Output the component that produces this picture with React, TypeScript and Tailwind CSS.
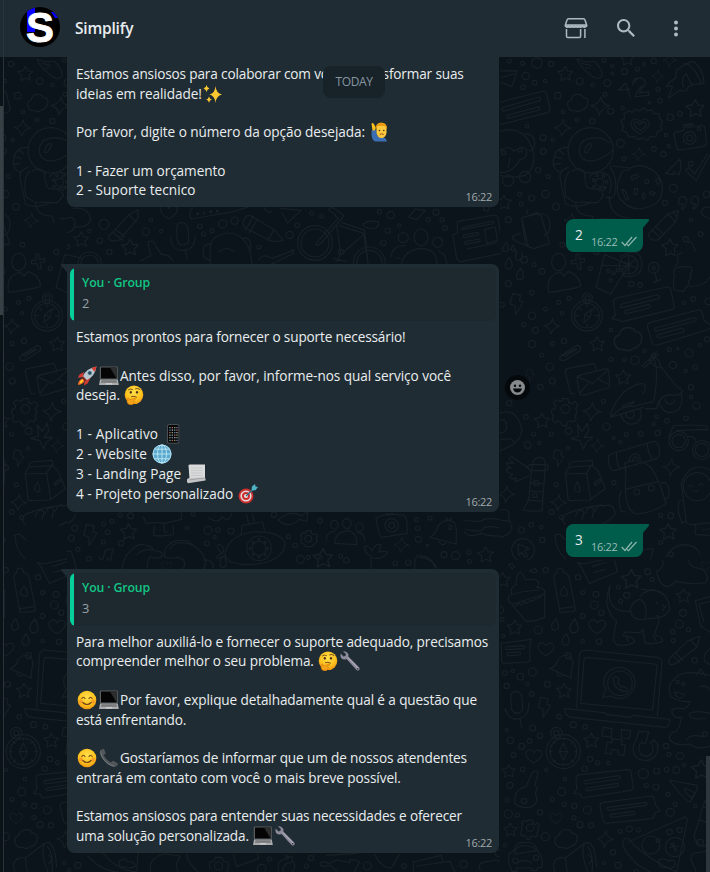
import type { ReactNode } from 'react'

type Dot = [number, number, number]
type Mark = [number, number, number?]

/* ---------- Wallpaper doodles ---------- */

const STAR = 'M0-22l7 14 15 1-11 12 4 15-14-7-14 8 2-16-12-11 16-3z'
const SPARK = 'M2-28Q4-4 28 0Q4 4-4 28Q-5 5-28-2Q-4-4 2-28z'
const HEART = 'M0 22Q-24 8-25-8Q-22-24-6-18Q0-14 1-10Q8-22 20-17Q32-8 20 6Q12 16 0 22z'
const CLOUD = 'M-28 14Q-36-2-20-8Q-14-28 4-24Q14-24 16-16Q34-14 30 2Q28 18 12 22Q2 30-8 24Q-24 26-28 14z'
const BOLT = 'M-12-30L12-24 8-8 20-4-4 34-4 8-20 2z'
const DROP = 'M2-18Q12 0 10 10Q4 20-6 16Q-14 8-8-4z'

function Dots({ list }: { list: Dot[] }) {
  return <>{list.map(([x, y, r], i) => <circle key={i} cx={x} cy={y} r={r} />)}</>
}

function Marks({ d, at }: { d: string; at: Mark[] }) {
  return <>{at.map(([x, y, s = 1], i) => <path key={i} d={d} transform={`translate(${x} ${y}) scale(${s})`} />)}</>
}

function DoodlesTop() {
  return (
    <g transform="translate(500 0) scale(.33333)">
      <Dots list={[[28, 183, 6], [68, 190, 6], [111, 189, 16], [153, 192, 8], [77, 228, 11], [104, 248, 7], [135, 243, 5], [69, 262, 7], [173, 287, 10], [239, 244, 10], [277, 254, 5], [322, 249, 10], [312, 181, 6], [337, 197, 5], [337, 220, 4], [374, 215, 9], [412, 207, 6], [433, 192, 5], [461, 183, 8], [474, 268, 6], [480, 302, 7], [448, 308, 4], [511, 352, 10], [540, 341, 7], [368, 325, 5], [332, 333, 9], [315, 283, 6], [189, 336, 5], [231, 360, 5], [277, 363, 8], [81, 379, 5], [129, 413, 9], [158, 419, 5], [130, 454, 9], [145, 529, 6], [114, 511, 8], [59, 583, 6], [64, 612, 6], [95, 594, 9], [136, 582, 11], [25, 659, 9], [168, 620, 10], [361, 430, 12], [372, 476, 6], [462, 447, 7], [490, 463, 8], [506, 438, 5], [498, 405, 5], [520, 565, 12], [572, 491, 7], [495, 609, 8], [573, 659, 5], [187, 734, 7], [620, 583, 10], [557, 718, 8], [602, 702, 7], [299, 547, 12], [281, 540, 4], [291, 526, 4], [310, 528, 4], [320, 545, 4], [315, 562, 4], [299, 568, 4], [282, 560, 4]]} />
      <Marks d={STAR} at={[[196, 221], [586, 325, 1.2], [12, 607], [510, 741, 1.1], [382, 176, 0.9]]} />
      <Marks d={SPARK} at={[[301, 318], [188, 384, 0.9], [473, 229, 0.65], [416, 463, 0.7], [510, 181, 0.75], [214, 662, 0.8]]} />
      <Marks d={CLOUD} at={[[233, 308]]} />
      <path d="M-6 213L52 212 36 260 6 247M6 232l36-10M-8 309L130 273Q138 274 140 282L150 326Q150 335 142 338L0 374M8 323L118 291q6 4 2 11L10 334q-8-3-2-11zM22 346l94-26q5 3 1 10L24 355q-6-3-2-9z" />
      <path d="M232 177q28 14 50 6 26 22 24 44-8 16-30 2-34-26-44-48zM246 190l26 6M256 204l14 0" />
      <path d="M377 249l-22 22 36-4M378 250l14 46M381 264l7 19M404 250q0-16 18-16 18 6 12 20l-16 24 28-2 0 10-40 4q0-12 20-32M397 254q4-28 30-18" />
      <path d="M528 213q30-26 54-28 30 24 30 66l-32 2q-18 6-22 20l-18-2-36 24 14-36-18 0q8-16 28-24zM552 190q30 4 52 60M550 260q-8-24 8-40l18 36" />
      <path d="M386 333l12 4 8-10 14 6 10-10 12 10 14-4 6 12 16 0 0 14 10 8-6 12 4 14-14 6-4 16-16-2-10 12-14-8-14 6-12-10-16 2-6-14-14-4 4-16-8-14 12-8-2-14zM420 402Q390 386 393 366q12-18 28 0 14-18 26 0 4 18-27 36zM420 391q-18-10-18-22 8-8 18 5 10-12 18-4 2 12-18 21z" />
      <path d="M525 397l27-6-2-16 26-6 8 12 20-4q10-1 11 9l4 44q0 8-8 9l-70 11q-10 0-11-8l-8-38q-1-6 3-7zM556 378l18-4 2 6-18 4z" />
      <Dots list={[[569, 414, 19], [569, 414, 9], [597, 387, 5]]} />
      <path d="M497 520L540 477q6 20-2 46-8 3-16-8l-2 9zM556 510l10-8 18 20 38-60M556 510l32 32 42-78" />
      {/* owl */}
      <path d="M-6 396q60-22 90 24 40 66-8 106-36 10-80 0M0 452q26-20 42 2 30-22 38-2 2 24-20 26-20 40-60 40M30 474l-6 30M70 402q30-4 34 26 0 22-16 24" />
      <Dots list={[[11, 458, 6], [60, 450, 6], [24, 542, 17], [75, 531, 17]]} />
      {/* astronaut */}
      <circle cx="272" cy="451" r="68" />
      <path d="M337 452Q280 500 246 474 228 450 248 424q20-16 60-8l22 12M254 456q0-22 18-26 6 6-4 16-4 16-14 10zM204 442q-46 0-44 50 4 22 20 24M177 450l14 12M164 470l20 6M161 494l20-4M204 502q-28 10-24 30l16 80q30 16 76-5M208 514q-20 20-10 76l24 16 70 2 18-20-4-14 12-12-10 0q-18 10-44 2-10-12-10-46-10-20-38-4M330 500q26 40 14 80-4 18-26 12M227 608q0 40 50 40l4 20M328 590q0 60 60 64M300 656l100 4M336 498l56 6M268 530q28-26 58-2 14 20 2 50" />
      {/* donut */}
      <path d="M360 530q-16 36-2 64 34 42 76 30 50-10 52-50 6-42-30-64-40-26-72 0-24 2-24 20zM392 530l20-8 4 8-20 10zM436 540q6-6 10 2 2 8-6 10-8-4-4-12zM466 540l10-6 4 14-6 6zM404 566l10 0-4 18-8-2zM430 578l6 8-4 12-6-6zM450 574l16 4-4 8-14-6zM366 568l10 4 10 26-8 2z" />
      <path d="M536 612q-2-24 14-22 18 4 4 32-6 8-10 6l6-16q-12 0-14 0zM572 608q0-20 14-20 18 8 4 30-8 12-12 8l8-14q-10 0-14-4zM630 622q-24-4-26 16 4 12 26 18" />
      {/* watering can */}
      <path d="M65 654l46-16 12 10 26 82-48 16-24-10zM66 656l18 80q-40-8-48-26l24-10M64 654l52-14M112 642q40-6 38 38-4 24-18 26M80 640l4-12M20 726l-14 22q10 14 20 0zM38 736l-6 14 18 6z" />
      {/* pen */}
      <path d="M446 700l58-58 32-10-8 32-54 56q-30 4-28-20zM456 690l26 24M466 680l26 24M504 642l20 22M520 636l10 14M564 730q4-12 14 2l12 30 40 4" />
    </g>
  )
}

function DoodlesMiddle() {
  return (
    <g transform="translate(500 250) scale(.33333)">
      <Dots list={[[73, 29, 10], [102, 44, 6], [126, 64, 9], [25, 101, 9], [95, 128, 7], [6, 164, 7], [96, 197, 11], [137, 177, 6], [176, 157, 6], [207, 145, 6], [186, 190, 5], [71, 224, 6], [106, 241, 9], [96, 282, 11], [157, 281, 6], [192, 273, 8], [125, 315, 6], [149, 350, 11], [333, 240, 5], [333, 328, 6], [374, 329, 5], [405, 331, 13], [434, 302, 5], [461, 315, 6], [508, 299, 6], [533, 296, 3], [567, 309, 12], [600, 286, 5], [519, 345, 11], [557, 363, 5], [586, 352, 7], [573, 412, 8], [573, 441, 5], [589, 467, 11], [157, 393, 9], [121, 411, 8], [310, 454, 6], [78, 500, 7], [28, 460, 8], [319, 530, 11], [206, 543, 10], [154, 552, 6], [101, 552, 6], [118, 579, 5], [83, 585, 10], [203, 595, 5], [341, 564, 4], [361, 577, 5], [379, 553, 6], [422, 552, 7], [473, 549, 8], [461, 521, 5], [470, 500, 5], [501, 512, 7], [558, 505, 7], [394, 102, 8], [420, 105, 7], [552, 158, 5], [580, 147, 7], [271, 55, 6], [342, 698, 6], [169, 704, 6], [155, 786, 7], [185, 802, 6], [127, 870, 8], [94, 824, 7], [64, 840, 9], [124, 831, 5], [482, 796, 6], [512, 797, 9], [482, 877, 6], [289, 6, 8], [625, 154, 10], [622, 268, 8], [513, 913, 7]]} />
      <Marks d={STAR} at={[[292, 282], [370, 382], [126, 512], [505, 845, 1.1], [510, -3]]} />
      <Marks d={SPARK} at={[[156, 229, 0.85], [276, 485], [292, 588, 0.7], [514, 652, 0.9], [176, 758, 0.85], [20, 733, 0.9]]} />
      <Marks d={BOLT} at={[[50, 160], [91, 375, 0.6], [176, 623, 0.8]]} />
      <Marks d={DROP} at={[[26, 40], [57, 14], [60, 72]]} />
      <Marks d={CLOUD} at={[[384, 266, 1.35]]} />
      {/* person */}
      <ellipse cx="176" cy="36" rx="21" ry="26" />
      <path d="M146 126q-10-48 34-60l12 12 12-14q34 10 38 44-8 6-60 14-24 6-36 4zM228 12l8 0 2 16 16-2 0 10-14 2 4 18-8 2-6-18-16 2 0-10 14-2z" />
      {/* cup with lemon */}
      <path d="M314 14l74 30-56 88-44-20zM308 46l76 2M360 20q60-36 66 22-2 40-46 38-10-2-14-10" />
      <Dots list={[[325, 62, 5], [340, 70, 5], [353, 61, 5], [332, 91, 5], [386, 44, 28], [386, 44, 5], [461, 53, 16], [461, 53, 5]]} />
      <path d="M386 16v56M360 34l50 20M364 60l44-32M465 69l6 26-12 2 24-8M524 50q14-10 8-36l40-20M524 56q20-10 50-4 6 16-4 20 6 16-4 20 4 14-6 18l-10 14-26-4q-6-10-2-20-4-14 2-20-6-12 0-24zM570 110q50-4 60-30" />
      {/* compass */}
      <Dots list={[[261, 197, 46], [261, 197, 37], [262, 144, 15], [262, 144, 7]]} />
      <path d="M274 178l-4 24-18 16 2-24zM254 194l16 8M261 164v8M261 222v8M228 197h8M286 197h8M238 174l6 6M284 174l-6 6" />
      {/* speech bubbles */}
      <path d="M350 144L500 111q10-1 12 8l11 50q0 8-8 10L366 215q-10-6-30-8l10-12-6-40q0-8 10-11zM366 162L472 134q10 2 4 12L366 173q-8-4 0-11zM376 182l70-19q8 3 3 11l-70 17q-10-2-3-9z" />
      <path d="M450 218L594 180q10-2 12 6l6 24q14 14 28 18l-20 12-150 46q-12 0-14-10l-14-46q0-10 8-12zM466 234L584 203q8 4 3 10L467 244q-8-4-1-10zM474 254l72-20q10 2 4 12l-70 18q-14-2-6-10z" />
      <path d="M184 316L232 286q14 4 8 16L192 332q-16 0-12-12l48-24M194 320l36-22" />
      {/* letters */}
      <path d="M224 430q-10 6-14-6L196 366q-2-8 6-10l80-16 8 20M238 376l80-20q7 0 8 6l3 42q0 8-6 10l-74 22q-8 1-10-6l-8-44q-1-8 7-10zM232 380l46 20 44-38M240 430l24-30M328 404l-34-18" />
      {/* gear */}
      <path d="M188 446h16l2 12 10 3 9-7 9 12-7 9 3 8 0 10-6 2 5 12-10 9-9-4-8 5-2 10h-13l-3-9-11-5-9 5-8-10 5-12-6-6 0-11 10-3 2-9-7-9 11-9 9 5 8-3z" />
      <Dots list={[[196, 477, 13]]} />
      {/* scooter */}
      <path d="M424 350L472 304M432 354L476 312M448 328q24-20 36 26-24 0-36-26zM460 324q18 30 2 130l-64 16q-30-6-66 32 0-30 40-76 40-30 62-24 6 20-6 30M338 500l92-28M486 354q34 48 62 70-10 16-38 10-34 4-40 42l-34 0M366 468l36-14q6 6-34 20zM362 494q16 40 50 24 18-16 8-40M476 456q20 50 60 22 14-20 8-46M380 486a12 12 0 1 0 18-2M496 446a14 14 0 1 0 28 4" />
      <path d="M232 524l14 20 16-24 4 24-14 18 26 0-18 14-10 20-10-24-28-6 24-8z" />
      {/* headphones */}
      <Dots list={[[536, 573, 29], [536, 573, 20], [606, 600, 28], [606, 600, 20]]} />
      <path d="M506 560l14-32q60-6 100 0 6 20-6 10L530 542M562 560q20-4 26 14" />
      {/* lighthouse */}
      <path d="M96 646l-10 104-16 30q20 6 56 2l10-136M84 652q-2-8 6-8h48q8 2 7 10-1 8-10 8H92q-8-2-8-10zM98 642q4-22 22-20 16 2 16 20M92 698l40 4M88 722l42 4M84 750l44 4M102 706v-10q6-10 14 0v10zM98 742v-8q6-10 14 0v8zM84 654l-48-34q-16 4 4 20l-20-2q-2 10 14 16l-16 2q2 14 20 16l-8 10q4 8 20 2l-4 12 40-18M0 490q50-20 66 50-2 40-66 62M0 510q20-6 20 20 0 16-20 20M0 570q40-10 42 10" />
      {/* milk carton */}
      <path d="M216 636l58-5q4 0 4 6v10L208 651v-9q0-6 8-6zM208 651L196 668l8 78q0 6 8 6l58-2 46-34-22-54-18-16M196 672l64-2 14-24M260 670l12 80M232 696q14 22 4 30-14 0-12-14zM282 700l16-12 4 6-16 12z" />
      {/* backpack */}
      <path d="M332 612L460 574q14 0 18 22 2 24-8 30L342 662q-10 0-16-22-4-20 6-28zM350 608q-2 30 10 48M442 582q0 20 14 46M374 640q30-14 62 0 30 10 62 120-30 26-90 32-40-14-30-120zM386 634q6-26 24-22 12 4 10 18M398 630q8-18 16-2M376 718l100-24M364 724q-14 20 0 60l16 2M484 700q22-10 24 34-4 12-12 12" />
      <Dots list={[[410, 726, 9], [454, 714, 9]]} />
      {/* character */}
      <circle cx="592" cy="710" r="42" />
      <path d="M630 660q-60-30-86 40l14 110q0 16 20 14l60-6M544 750q-14 4-8 40l10 30 10-6M566 710q6-10 12 0M596 706q6-10 14 0M580 722q8 8 16-1M586 822l2 14q-6 10 0 18l40 2M606 840l26-4" />
      {/* bread */}
      <path d="M196 824q-16-14 0-30Q260 764 330 766q18 8 14 30-30 26-44 30M226 800q10-30 26-14l-6 22M256 792q10-30 26-14l-6 26M286 784q10-30 26-14M0 780q34-8 26 26l10 30q-6 20-36 26M0 810l30 4" />
      <Dots list={[[69, 900, 34]]} />
      <path d="M54 882l34 14-14 6 8 16-8 4-8-16-10 10zM162 856l16-4 22 20M166 860q0 40 30 66M424 900l36-4-8 30M500 920q10-30 50-36 40 0 50 30" />
    </g>
  )
}

function DoodlesBottom() {
  return (
    <g transform="translate(500 560) scale(.33333)">
      <Dots list={[[137, 30, 8], [234, 52, 8], [248, 98, 6], [288, 103, 9], [283, 135, 12], [248, 168, 7], [304, 158, 8], [355, 81, 6], [380, 106, 9], [362, 124, 6], [443, 35, 9], [457, 58, 6], [115, 210, 12], [248, 244, 5], [297, 245, 8], [518, 215, 7], [520, 242, 6], [538, 192, 12], [565, 209, 6], [549, 159, 10], [584, 301, 8], [10, 228, 5], [15, 339, 7], [38, 333, 5], [61, 350, 10], [97, 336, 12], [82, 371, 5], [20, 378, 8], [95, 402, 7], [142, 373, 9], [178, 470, 7], [220, 494, 9], [256, 500, 7], [20, 511, 5], [98, 504, 9], [31, 541, 10], [89, 543, 7], [120, 527, 8], [65, 559, 9], [41, 585, 7], [270, 597, 8], [293, 608, 6], [325, 609, 5], [254, 626, 8], [195, 657, 5], [139, 629, 5], [68, 628, 7], [30, 676, 9], [22, 720, 6], [185, 695, 12], [157, 718, 6], [193, 733, 6], [223, 738, 8], [262, 750, 12], [222, 773, 6], [240, 794, 9], [273, 796, 8], [120, 757, 8], [52, 765, 6], [25, 762, 12], [136, 830, 12], [14, 856, 5], [430, 641, 15], [470, 633, 9], [500, 629, 7], [529, 630, 10], [552, 616, 5], [507, 583, 6], [540, 588, 11], [498, 558, 8], [439, 676, 6], [468, 681, 9], [504, 703, 6], [526, 733, 6], [511, 757, 12], [586, 738, 5], [388, 807, 9], [361, 814, 6], [415, 810, 6], [339, 877, 8], [313, 908, 5], [354, 916, 9], [0, 150, 11], [6, 178, 6], [615, 522, 7], [409, 934, 6]]} />
      <Marks d={STAR} at={[[394, 57, 1.3], [551, 107, 0.95], [44, 202], [192, 392], [274, 541], [26, 633, 0.9], [31, 809, 0.9], [604, 628, 1.3], [8, 59]]} />
      <Marks d={SPARK} at={[[316, 838, 0.9]]} />
      <Marks d={BOLT} at={[[133, 440, 0.95]]} />
      <Marks d={DROP} at={[[165, 194], [222, 198, 1.2], [197, 239]]} />
      <Marks d={HEART} at={[[291, 199], [137, 267, 0.95], [101, 588, 0.95], [168, 774, 0.75], [618, 17, 0.6]]} />
      <Marks d={CLOUD} at={[[198, 836, 1.1]]} />
      {/* cupcake */}
      <path d="M36 104q-8-22 14-30-6-12 6-34 6-14 20 20 30-6 38 4 6 14-4 18 22 0 24 12 0 14-20 14L40 132q-18-2-14-22 12-14 92-20M48 138l8-8 8 6 8-10 10 4 8-8 8 2 8-8 8 0 10-8M38 136l38 46q20 6 58-10l0-80" />
      {/* bottle */}
      <path d="M172 38q-4-14 10-14 10 4 8 14 14 0 18 16l18 92q0 8-8 9l-38 2-18-100q-2-16 10-19zM180 146l40-6M192 78q16 22 8 30-18 2-20-12zM26 14q10-8 18 8l-8 4zM88 32l18-6 6 8q-10 8-24-2z" />
      <path d="M232 8l18 4 92-20 10 44-84 34-24-48zM276 20l44-14M280 38l36-10M470 34q6 40 30 46 20-4 26-16 54 12 90 4 16-14-8-40-50-10-40-30M470 34q30-14 14-40M4 250L94 238q-6 20-4 60 0 8-8 8L14 310q-8 0-9-8zM20 260l52-3q6 5 0 9l-52 3q-7-4 0-9zM24 278l36-2q5 5 0 9l-36 2q-6-4 0-9z" />
      {/* dog */}
      <path d="M330 76q-26 70 20 108-12 50-8 60l8 10q30 6 54-8-2-16-22-16l-12-2 4-12 46 2q6-4 8-10l4 22q0 14 6 20 26 4 50-6-2-16-16-16l-8-8q24-60 4-52M330 76q-16 84 64 78M418 118q-30 10-26 42 14 24 44 18 10-50-18-60zM420 110q30-36 70-8 20 20 18 48-10 26-66 26M380 226l4 20M460 224l8 18M436 98q20-20 54 6M486 134l8 8 6-6M494 142l-6 10M424 88l40 4" />
      <circle cx="470" cy="128" r="2" />
      <path d="M588 122l42-12M586 122l16 76 28 18M598 132l32-8M598 134l14 54M508 296l54-52 38-16-10 34-62 48q-28 12-20-14zM518 286l22 22M526 278l22 22M572 240l16 18M630 266q-26 20-14 40l14 8" />
      {/* bell */}
      <path d="M150 326q20-8 24-26 10-18 34-12 14 14 10 30-6 16-4 36zM170 340q6 14 20 6" />
      <circle cx="205" cy="287" r="9" />
      {/* laptop */}
      <path d="M230 444L238 286q2-16 18-16L472 292q14 2 14 16L472 468M242 430L252 300q0-8 8-8L464 312q8 0 7 8L458 450zM194 446l120 12q4 6 8 6l70 8q6-4 6-6L510 478q0 20-14 24L216 472q-22-4-22-26z" />
      <circle cx="360" cy="370" r="37" />
      <path d="M318 388q-18-30 10-56 34-22 66 6 24 34-2 62-26 26-60 8l-24 4zM340 354q6-10 14 0 6 10-2 14l12 14q6-6 18 4 0 10-10 8-32-6-32-40z" />
      {/* microphone */}
      <path d="M32 410q2-16 16-16 16 2 18 20l2 30q-2 14-16 16-14 0-18-16zM16 446q10 38 44 30 28-8 26-46M16 446q-4 6 6 10M60 476l6 28" />
      {/* dinosaur */}
      <path d="M630 346q-80-20-104 8-30 24-12 56 20 18 56 14-4 20-22 22-36-6-32 12 4 18 28 14-2 30-16 42-26 6-18 26 20 20 60 12 20 20 60 6M568 460q20-10 62 0M588 346l14-20 14 24M524 396l28 6q-2 14-16 12-10-6-12-18zM568 460q0 24 50 14M600 380q20-6 30 10M560 540q10-20 50-10" />
      <Dots list={[[533, 366, 5], [550, 373, 5]]} />
      {/* compass */}
      <Dots list={[[190, 575, 51], [190, 575, 40], [169, 519, 17], [169, 519, 8]]} />
      <path d="M190 549l12 26-12 26-12-26zM178 575h24M190 540v-6M190 610v6M156 575h-8M224 575h8M166 550l-6-6M214 550l6-6M166 600l-6 6M214 600l6 6" />
      <path d="M310 502l26 4-2 26-28-4zM364 508l28 4-4 24-24-2zM336 536l30 4-2 14 12 0-4 32-18-2 0-14-18-2-2 14-18-2 6-34 14 2z" />
      <path d="M408 540q-18 30 0 52 30 22 58-4 18-28-4-48l-10 8q14 16 2 34-16 14-32 0-12-18 2-36l12 6 10-36-30-2z" />
      {/* key */}
      <path d="M92 648q6-18 20-14 4 4-2 20l-6 22 8 8-6 16q14 30-16 42-34 4-46-14-2-40 34-48z" />
      <circle cx="72" cy="723" r="8" />
      <path d="M238 644L384 629q8 0 9 8l7 44q0 8-8 10L246 714l-6-12-20-2 10-12-2-34q0-8 10-10zM254 662L356 647q8 4 2 10L256 672q-8-4-2-10zM260 684l92-14q7 4 1 9l-92 13q-8-4-1-8z" />
      <path d="M306 728L454 708q8 0 9 8l4 20 14 16-16 6-2 8q0 8-8 10L320 790q-8 0-10-8L300 738q0-8 6-10zM324 742l114-15q6 4 1 9l-114 15q-8-4-1-9zM332 763l70-9q6 4 1 9l-70 9q-7-4-1-9zM508 660l84 16q0 20-22 50-16-4-62-66zM556 684l30 16-12 14-22-22z" />
      <path d="M84 780h14v10l8 4 6-6 6 6-4 8 2 10-6 6 4 8-8 6-8-4-8 2v8H80v-8l-8-4-8 2-2-10 4-8-2-8 4-8-4-6 8-6 8 2 4-2z" />
      <circle cx="90" cy="803" r="11" />
      {/* car */}
      <path d="M28 880l14-8q6-30 34-24 26-6 34 18l6 12q14 14 10 44l-14 2-2 8H96v-8H50v10H36l-8-20q-4-20 0-34zM44 882q4-30 34-24 26 0 30 14zM54 908q20-14 40 0" />
      <Dots list={[[46, 902, 8], [108, 894, 8]]} />
      {/* megaphone */}
      <path d="M196 894L254 850q30-14 36 70M196 894l6 42M196 894q-30-6-36 22l4 20M254 850q-14 30 10 86M262 860q20 20 14 76M266 886q18 10 0 26" />
      {/* pizza */}
      <path d="M372 838q16-10 26 14Q450 900 530 936L562 780q-4-14-14-6L384 846M370 842q-10 20 40 70l50 30M476 900q16-8 30 4 20-10 20 12-12 14-30 6-22 4-20-22z" />
      <Dots list={[[453, 855, 27], [525, 861, 29], [474, 841, 6], [509, 816, 8], [539, 810, 8], [600, 848, 10]]} />
      <path d="M510 862l26-4M520 848l6 26M512 850l20 22M630 716q-14 0-18 14l-30 100q4 20 30 30l18-20M610 740l20 10M600 780l30 10M572 900q0-24 26-22l32-8M574 900l14 34" />
    </g>
  )
}

function DoodlesBetween() {
  return (
    <>
      <g transform="translate(60 205) scale(.33333)">
        <Dots list={[[132, 58, 15], [257, 80, 11], [303, 79, 5], [273, 44, 5], [119, 107, 8], [88, 78, 5], [21, 125, 7], [148, 141, 8], [420, 64, 7], [430, 87, 6], [456, 77, 6], [488, 57, 12], [524, 47, 11], [597, 126, 6], [712, 61, 7], [689, 90, 11], [755, 24, 6], [785, 33, 6], [958, 20, 6], [992, 30, 11], [983, 77, 8], [1018, 61, 5], [970, 113, 8], [1105, 44, 6], [1128, 22, 9], [1146, 44, 6], [1155, 69, 7], [765, 114, 52], [765, 114, 42], [928, 174, 48], [928, 174, 38], [843, 141, 8], [89, 176, 35], [89, 176, 26], [1279, 10, 8]]} />
        <Marks d={STAR} at={[[64, 103], [210, 127, 1.1]]} />
        <Marks d={HEART} at={[[326, 20]]} />
        <path d="M15 40q30-10 30 16-4 34-45 26M40 10q50-4 52 36-14 24-46 20M12 180l4-32 50 12M146 94l60-64 28-16 0 26-58 66q-30 8-30-12zM158 82l30 24M166 72l28 24M206 30l22 20" />
        <path d="M350 72q-2-18 16-20 14 2 18 20l2 34q-2 12-16 14-16 0-18-14zM334 96q-6 34 30 40 40 2 42-42M376 138l6 26M398 8q-16 20-4 34L520 20l50-16M266 110q14-6 20 10l18 28q26 0 34 20M264 112l8 40-30 16" />
        <Dots list={[[413, 26, 3], [432, 24, 3], [452, 20, 3], [472, 18, 3]]} />
        <path d="M452 180q-6-66 10-80 50-32 84 0 26 20 30 80M452 116q-30 0-20 40l20 12M546 100q30-8 26 34M478 140q24-20 44 0M550 48q8-20 22-16l70 42 28 32q-26 6-42 0l-70-36q-12-8-8-22zM580 34l-24 42M592 42l-24 42M642 74l-18 32M612 6q6 20 24 14M662 10l62 6-42 38q-10-20-16-30M596 164q10-20 40-4l66-24-6-2 4 12-54 26-20 8" />
        <path d="M766 118L834 40q-20-24-28-24 4-14 20-4l26 20-68 82q-12 12-18 4zM830 62l12 80M838 62l76 24-66 58M844 52l70 24M912 92l12 84M914 76l10 100M908 58q20-14 46-8 6 12-12 22l-28-6zM820 160l38 10M830 170l10-20" />
        <Dots list={[[1030, 98, 15], [1133, 112, 15]]} />
        <ellipse cx="1083" cy="97" rx="21" ry="25" />
        <path d="M1024 180q8-46 60-50 50 4 46 50M992 156q6-36 44-34M1008 158l14 4M1136 138q24 10 24 40M1046 36l20-24 30 4-26 28zM1192 50L1302 30q10 0 12 8l14 96q0 10-8 12L1204 170q-10 0-14-10l-12-70 14-6zM1206 68l94-20q4 4 0 8l-94 18q-4-4 0-6zM1212 90l42-8q4 4 0 8l-42 8q-4-4 0-8zM1216 110l42-8q4 4 0 8l-42 8q-4-4 0-8zM1220 132l90-18M1274 74l32-8 6 40-32 10z" />
      </g>
      <g transform="translate(60 510) scale(.33333)">
        <Dots list={[[44, 54, 9], [34, 84, 9], [6, 82, 6], [54, 118, 6], [87, 146, 7], [131, 42, 6], [156, 34, 6], [143, 67, 7], [130, 96, 6], [183, 100, 8], [181, 15, 6], [212, 17, 9], [381, 54, 5], [399, 12, 6], [444, 61, 12], [474, 60, 7], [513, 63, 9], [464, 81, 5], [440, 100, 7], [686, 80, 6], [705, 106, 7], [745, 86, 10], [781, 142, 5], [721, 148, 12], [745, 142, 6], [842, 138, 6], [859, 151, 8], [1075, 88, 9], [1073, 55, 7], [1069, 29, 6], [1110, 24, 6], [1102, 107, 4], [1045, 158, 8], [1006, 160, 7], [1152, 134, 9], [1187, 137, 12], [1226, 127, 7], [1228, 154, 6], [780, 32, 7], [642, 14, 8], [597, 115, 37], [597, 115, 21], [597, 88, 3], [615, 97, 3], [622, 115, 3], [615, 133, 3], [597, 141, 3], [579, 133, 3], [571, 115, 3], [579, 97, 3], [995, 46, 20], [995, 46, 9]]} />
        <Marks d={STAR} at={[[206, 65, 1.1], [789, 144, 1.3], [1277, 134, 1.05]]} />
        <Marks d={SPARK} at={[[1024, 105, 0.8]]} />
        <Marks d={BOLT} at={[[91, 73]]} />
        <Marks d={HEART} at={[[319, 168, 0.6]]} />
        <path d="M0 44q40-2 46-30M130 144l6-24 24-4-8 28M118 140a6 6 0 1 0 12 4M142 142a6 6 0 1 0 12 4M0 124l34 0 16 54M0 156l20-6M186 178q4-50 50-74 36-2 46 18 22 0 26 14-6 10-26 8-20-14-20 30M230 134q20-20 50-14M430 178q26-40-50-86-50-6-64 26-6 20 0 24 20 4 40 0 30 10 10 38M330 116q20-30 70-10M430 150q30-4 30 24" />
        <path d="M250 20l8 20q40-4 56 0l50-12 0-24M284 50l-4 24q0 6 40 2l20-2 0-26M310 44l4 22 10 0M496 128q10-50 80-62 80-4 98 30 8 34-50 60-66 16-110 0-20-10-18-28zM544 72l2-26 62-10 6 26M560 14l6 28M578 10l4 26M486 130q-20-16-10-26 16-2 14 24M486 130q-20 10-14 14 10 6 22-8M486 138q-14 36 4 34 16-4 4-30M446 24q30 20 40-4 20 20 30-10M654 30q40-34 70-12l20-14-4 30-22-6q-30 30-64 2z" />
        <path d="M740 62h14v8l6 4 8-4 4 8-4 8 4 6-4 8-8 4-2 6h-22l-4-8-8-2-2-10 4-6-4-8 6-8 8 2zM824 100q2-34 38-38 30 4 28 42zM848 40q0-14 14-14 12 4 12 16-4 14-14 14-12-4-12-16zM812 44a11 13 0 1 0 22 0a11 13 0 1 0-22 0M888 52a11 13 0 1 0 22 0a11 13 0 1 0-22 0M798 92q0-26 30-30M914 94q0-26-24-26M948 24l30-12 40 2q20 0 22 16l2 40-78 12q-8-8-16-58zM980 16l20-6" />
        <path d="M934 178q-2-30 0-40-20-4-20-30 14 0 22 14 10-24 26-18-2 20-8 22 20-4 28 0-10 24-46 18M1110 82q18-10 24-34 20-24 48-12 10 14 6 66zM1138 96q8 14 18 4M1158 22a8 8 0 1 0 16 0M1166 58l8 0 2-10-6-4zM1064 178q0-36 8-40 40-6 60 40M1080 142q40 4 44 30M1210 30q50 8 60 0t60 0M1216 58q50 10 54-2t60 0M1214 66q10 20 50 4 20 10 70 8" />
      </g>
      <g transform="translate(0 846) scale(.33333)">
        <Dots list={[[234, 58, 9], [192, 50, 5], [207, 72, 5], [656, 60, 12], [808, 39, 6], [785, 68, 13], [933, 36, 8], [920, 60, 6], [1102, 60, 12], [1212, 60, 7], [1391, 55, 11], [1497, 22, 11]]} />
        <path d="M264 30q40 46 90 48M310 22q40 50 100 56l4-56M358 46q20-14 24 2 24-4 24 14-20 8-30 0-20 6-18-16zM452 78q-10-40 40-54l50 6-14 24 6 24M560 26q0 20 36 54M646 34h20l4 12 14 2 2 14-6 16M646 34l-4 12-14 2 2 22M700 26l10 36 66-24-4-16M836 78q-10-40 30-40l-10-10 22 6-4 16q-26 0-26 28M880 46q10 20-4 32M960 54q0-10 30-2l20-10 40 8 0-10q40 6 24 14l-10 24M960 54q0 12 30 4l20 16M980 28l90-6M1124 26q20 40 50 40l24-40M1240 78v-30l84-20 4 16M1250 60l100-14 14 32M1440 70q-10-24 30-24 40-14 38 30" />
      </g>
    </>
  )
}

function Wallpaper() {
  return (
    <svg className="absolute inset-0" width="710" height="872" fill="none" stroke="#172026" strokeWidth="3.6" strokeLinejoin="round" strokeLinecap="round">
      <svg x="0" y="57" width="67" height="815" viewBox="540 57 67 815">
        <DoodlesTop /><DoodlesMiddle /><DoodlesBottom />
      </svg>
      <svg x="67" y="57" width="433" height="815" viewBox="67 57 433 815"><DoodlesBetween /></svg>
      <svg x="500" y="57" width="210" height="195" viewBox="500 57 210 195"><DoodlesTop /></svg>
      <svg x="500" y="252" width="210" height="308" viewBox="500 252 210 308"><DoodlesMiddle /></svg>
      <svg x="500" y="560" width="210" height="312" viewBox="500 560 210 312"><DoodlesBottom /></svg>
    </svg>
  )
}

/* ---------- Emoji ---------- */

const faceShade = (
  <radialGradient id="face" cx=".5" cy=".35" r=".65">
    <stop offset="0" stopColor="#ffe04a" /><stop offset=".65" stopColor="#fcc21e" /><stop offset="1" stopColor="#ee9512" />
  </radialGradient>
)

const EMOJI: Record<string, ReactNode> = {
  sparkles: <g fill="#fcc832"><path d="M12.5 2Q13 9 19 10.500Q13 12 12.500 19Q12 12 6.500 10.500Q12 9 12.500 2z" /><path d="M3.500 1Q4 4 6.500 4.500Q4 5 3.500 8Q3 5 .5 4.500Q3 4 3.500 1zM6 12.500Q6.500 15 9 15.500Q6.500 16 6 18.800Q5.500 16 3 15.500Q5.500 15 6 12.500z" /></g>,
  raising: (
    <>
      <path d="M1.500 9q2-2 5-1l.5 6q6 0 9 3l1 2.500H5Q1 18 1.500 9z" fill="#3c6eb4" />
      <path d="M1.500 1.500q1-1 2 0l1.500 2.500q1.500 2-.5 4.500H2.500z" fill="#fcc21b" />
      <path d="M6.500 6q0-5 5-5t5 5v5q-1 5-5 5t-5-5z" fill="#fcc83c" />
      <path d="M5.800 8Q4.800 1 11 .5 17.500.5 17 8q-1-3-2-4H8Q6.500 5 5.800 8z" fill="#e99c10" />
      <circle cx="9.500" cy="8.500" r=".8" fill="#4a3018" /><circle cx="13.800" cy="8.500" r=".8" fill="#4a3018" />
      <path d="M9.700 12.500q2-1.500 4 0" stroke="#9b4b1c" fill="none" />
    </>
  ),
  rocket: (
    <>
      <path d="M7 6L2.500 8.500.8 12l5-1zM13.500 12l-3 5.500L7 19.500l1-6z" fill="#d33a31" />
      <path d="M5.500 11Q8.500 2.500 19.500.5 18 11 9 14.500z" fill="#b9c6cd" />
      <path d="M14.500 2.200Q17 .8 19.500.5q-.5 3-1.800 5.200z" fill="#d93b32" />
      <path d="M6 10q-1 2-.5 3.500L9 15l1-.5z" fill="#7c2422" />
      <circle cx="12.800" cy="7" r="2" fill="#25455b" stroke="#7aa0b6" strokeWidth=".7" />
      <path d="M1 19q0-5 4.500-6.500L7.500 15Q6 18.500 1 19z" fill="#f36c21" /><path d="M2.500 17.500q.5-3 3-4l.8 1Q5.500 17 2.500 17.500z" fill="#ffd52d" />
    </>
  ),
  laptop: (
    <>
      <rect x=".8" y=".5" width="18" height="13" rx="1" fill="#5b5d5f" /><rect x="2" y="1.500" width="15.600" height="11" fill="#050505" />
      <path d="M11 1.500h6.600v11z" fill="#2b2d2e" /><path d="M1 13.500h17.800l1 5.500H0z" fill="#a9abad" /><path d="M2.500 14.200h15l.5 2.500H2z" fill="#77797b" /><path d="M7 17h6l.3 1.500H6.700z" fill="#c7c9ca" />
    </>
  ),
  thinking: (
    <>
      <defs>{faceShade}</defs>
      <circle cx="10" cy="9.800" r="9.300" fill="url(#face)" />
      <ellipse cx="6.800" cy="7.300" rx="1.100" ry="1.400" fill="#49331b" /><ellipse cx="13" cy="7.300" rx="1.100" ry="1.400" fill="#49331b" />
      <path d="M4.500 4.800q2-1.500 4-.3M11.500 3.800q2.500-1.300 4.500.7M7.500 11.600q2.500-1 5 .5" stroke="#6b4519" strokeWidth=".9" fill="none" strokeLinecap="round" />
      <path d="M3.500 13.500q1-1.500 1.700.3l.3 1.200 5.500-2q1.500.2.300 1.400L9.500 15.500q2 1.500-.5 3.700-2.500 1.200-5-.4-1.500-2-.5-5.300z" fill="#f3a41b" stroke="#d67c0b" strokeWidth=".6" />
    </>
  ),
  phone: (
    <>
      <rect x="4.200" y=".3" width="12" height="19.200" rx="1.500" fill="#55585a" /><rect x="5" y="1" width="10.400" height="17.800" rx="1" fill="#070707" />
      {[3, 5.5, 8, 10.5, 13, 15.8].map((y, r) => [6.3, 8.7, 11.1, 13.3].map((x, c) => (
        <rect key={`${r}-${c}`} x={x} y={y} width="1.300" height="1.300" fill={['#6ba4a0', '#ad6c68', '#8c9b65', '#6d7fb2', '#a9a9a9'][(r * 3 + c) % 5]} />
      )))}
    </>
  ),
  globe: (
    <>
      <circle cx="10" cy="10" r="9.500" fill="#5aa9cf" />
      <g fill="none" stroke="#c9edf6" strokeWidth=".8"><circle cx="10" cy="10" r="9" /><ellipse cx="10" cy="10" rx="4.500" ry="9.200" /><path d="M10 .8v18.400M.8 10h18.400M2.300 5.200h15.400M2.300 14.800h15.400" /></g>
    </>
  ),
  page: (
    <>
      <path d="M2.500 1Q3 .5 4 .5H19v14.500H3.500z" fill="#d9dadb" /><path d="M1 15.500q1-2 3-1.500l14.500-.5q1.500.5 1 3L2 19.300Q.5 18.500 1 15.500z" fill="#c3c4c5" />
      <path d="M5 4h11.500M5 6.500h11.500M5 9h11.500M5 11.500h11.500" stroke="#bcbdbe" strokeWidth=".6" /><path d="M3.500 15.800L18.500 14" stroke="#8b8c8d" strokeWidth=".6" />
    </>
  ),
  target: (
    <>
      <circle cx="8" cy="12" r="7.500" fill="#c9302f" /><circle cx="8" cy="12" r="5.600" fill="#eadcdc" /><circle cx="8" cy="12" r="4" fill="#c9302f" /><circle cx="8" cy="12" r="2" fill="#eadcdc" />
      <path d="M8 12L15.500 5" stroke="#2b6f86" strokeWidth="1.300" /><path d="M13.500 6.500L14 2.500 17 0l.5 2.500L20 3l-2.500 3.200z" fill="#4db4c4" />
    </>
  ),
  wrench: (
    <>
      <path d="M.7 2.500L3.500 5.500 5.500 4.800 5.800 2.800 3 .4Q6.500-.3 8.300 3q.4 1.500 0 2.500l11 11q1 2-.8 3-1 .3-2-.5L6.500 8Q2.500 9.500.8 6.500.2 4.500.7 2.500z" fill="#8d8a9c" />
      <path d="M8 6.500L18.500 17.500" stroke="#c3bfcf" strokeWidth=".8" /><circle cx="17.700" cy="17.700" r=".8" fill="#39343f" />
    </>
  ),
  smile: (
    <>
      <defs>{faceShade}</defs>
      <circle cx="10" cy="10" r="9.300" fill="url(#face)" /><circle cx="4" cy="11.500" r="2" fill="#f48b27" opacity=".7" /><circle cx="16" cy="11.500" r="2" fill="#f48b27" opacity=".7" />
      <path d="M4.800 8.500q1.600-2.500 3.200 0M12 8.500q1.600-2.500 3.200 0M5.800 12.500q4.200 4 8.400 0" stroke="#6d421a" strokeWidth="1.100" fill="none" strokeLinecap="round" />
    </>
  ),
  receiver: (
    <>
      <path d="M1 2.500L4 .8q1 0 1.400 1l1.200 3q.2 1-.7 1.500l-1.200.8q2.300 5 7.300 7.500l1-1.200q.7-.8 1.600-.4l3.600 2q1 .7.500 1.700-1 2-3 2.300Q9 18 4.500 12 .5 7 1 2.500z" fill="#50565a" />
      <path d="M1.500 3.500q0 4 4 9 4 4.500 9.500 5.800" stroke="#7b8286" strokeWidth=".8" fill="none" />
    </>
  ),
}

function Emoji({ name }: { name: string }) {
  return <svg className="mx-px h-5 w-5 shrink-0" viewBox="0 0 20 20">{EMOJI[name]}</svg>
}

/* ---------- Messages ---------- */

type LineSpec = { h: string; t?: string; track?: string; parts?: ReactNode }

function Lines({ rows }: { rows: LineSpec[] }) {
  return (
    <div className="pl-[9px] text-[13.6px] text-[#e9edef]">
      {rows.map((r, i) => (
        <div key={i} className={`flex items-center whitespace-pre leading-none ${r.h} ${r.track ?? ''}`}>{r.parts ?? r.t}</div>
      ))}
    </div>
  )
}

function Incoming({ quote, children, className }: { quote?: string; children: ReactNode; className: string }) {
  return (
    <div className={`relative w-[432px] bg-[#202c33] ${className}`}>
      {quote && (
        <>
          <svg className="absolute -left-[7px] top-0" width="8" height="10"><path d="M1.500 0H8V9L1 1.500Q.5 0 1.500 0z" fill="#202c33" /></svg>
          <div className="mx-[3px] mb-1.5 flex h-[53px] overflow-hidden rounded-[6px] bg-[#1d282f]">
            <div className="w-1 bg-[#06cf9c]" />
            <div className="pl-2 pt-[7px] text-[12.8px] leading-4">
              <div className="text-[12.3px] font-semibold tracking-[-0.15px] text-[#13c584]">You · Group</div>
              <div className="mt-1 text-[#98a2a7]">{quote}</div>
            </div>
          </div>
        </>
      )}
      {children}
      <span className="absolute bottom-[4px] right-[7px] text-[11px] leading-3 tracking-[-0.3px] text-[#a0a9ad]">16:22</span>
    </div>
  )
}

function Outgoing({ text }: { text: string }) {
  return (
    <div className="relative ml-[499px] mt-3 flex h-[33px] w-[77px] rounded-b-[7.5px] rounded-tl-[7.5px] bg-[#005c4b] pl-[9px] pt-2">
      <svg className="absolute -right-[7px] top-0" width="8" height="11"><path d="M0 0H6Q8 .3 7 1.800L0 10z" fill="#005c4b" /></svg>
      <span className="w-4 text-[13.6px] leading-4 text-[#e9edef]">{text}</span>
      <span className="pt-[9px] text-[11px] leading-3 tracking-[-0.3px] text-[#99beb7]">16:22</span>
      <svg className="ml-[3px] mt-[9px]" width="17" height="12" fill="none" stroke="#8ab3aa" strokeWidth="1.300"><path d="M.7 6L4 9.500 11 1M6 8.500l1.500 1.200L15.500 1" /></svg>
    </div>
  )
}

export default function App() {
  return (
    <div className="relative flex h-[872px] w-[710px] flex-col overflow-hidden bg-[#0b141a] font-['Open_Sans','Noto_Sans',sans-serif]">
      <Wallpaper />
      <header className="relative flex h-[57px] shrink-0 items-center border-l border-[#202c33] bg-[#202c33] pl-[19px]">
        <svg className="-mt-[3px] overflow-visible" width="40" height="40">
          <clipPath id="disc"><circle cx="20" cy="20" r="20" /></clipPath>
          <g clipPath="url(#disc)">
            <rect width="40" height="40" fill="#000" /><rect x="7" width="8" height="25" fill="#0a00ff" /><path d="M31 5h8v6h-4z" fill="#0a00ff" />
          </g>
          <text x="6" y="34.900" fontFamily="Liberation Sans, sans-serif" fontSize="42" fontWeight="700" fill="#fff" stroke="#fff" strokeWidth=".8">S</text>
        </svg>
        <h1 className="ml-[15px] text-[15.500px] font-semibold tracking-[-0.2px] text-[#e9edef]">Simplify</h1>
        <div className="-mt-0.5 ml-auto flex items-center gap-[26px] pr-[22px] text-[#aebac1]">
          <svg width="24" height="24" fill="none" stroke="currentColor" strokeWidth="1.500" strokeLinejoin="round">
            <path d="M4.800 2.800h14.400q1.500 0 1.800 1.200l1.700 5.300-.2 1H1.500l-.2-1L3 4q.3-1.200 1.800-1.200z" /><path d="M1.600 8.900h20.800M1.600 10.300q1.600 2 3.200 0 1.700 2 3.400 0 1.700 2 3.400 0 1.700 2 3.400 0 1.700 2 3.400 0 1.900 2 3.800 0M2.500 13v7.200q0 1.400 1.300 1.400h11.500q1.300 0 1.300-1.400V13M20.900 13v9" />
          </svg>
          <svg width="24" height="24" fill="currentColor"><path d="M15.900 14.300H15l-.3-.3c1-1.100 1.600-2.700 1.600-4.300 0-3.700-3-6.700-6.700-6.700S3 6 3 9.700s3 6.700 6.700 6.700c1.600 0 3.200-.6 4.300-1.600l.3.300v.8l5.100 5.100 1.500-1.500-5-5.200zm-6.200 0c-2.600 0-4.600-2.100-4.600-4.600s2.100-4.600 4.600-4.600 4.600 2.100 4.600 4.600-2 4.600-4.600 4.600z" /></svg>
          <svg width="24" height="24" fill="currentColor"><circle cx="12" cy="6.500" r="2" /><circle cx="12" cy="12.500" r="2" /><circle cx="12" cy="18.500" r="2" /></svg>
        </div>
      </header>

      <main className="relative flex flex-col pl-[67px]">
        <Incoming className="h-[150px] rounded-b-[7.5px] pt-[7px]">
          <Lines rows={[
            { h: 'h-5', track: 'tracking-[-0.15px]', t: 'Estamos ansiosos para colaborar com você e transformar suas' },
            { h: 'h-[19px]', track: 'tracking-[-0.07px]', parts: <>ideias em realidade!<Emoji name="sparkles" /></> },
            { h: 'h-[19px]' },
            { h: 'h-5', track: 'tracking-[-0.06px]', parts: <>Por favor, digite o número da opção desejada: <Emoji name="raising" /></> },
            { h: 'h-[19px]' },
            { h: 'h-5', track: 'tracking-[-0.06px]', t: '1 - Fazer um orçamento' },
            { h: 'h-[18px]', track: 'tracking-[0.05px]', t: '2 - Suporte tecnico' },
          ]} />
        </Incoming>
        <Outgoing text="2" />
        <Incoming quote="2" className="mt-3 h-[248px] rounded-b-[7.5px] rounded-tr-[7.5px] pt-1">
          <Lines rows={[
            { h: 'h-5', track: 'tracking-[-0.14px]', t: 'Estamos prontos para fornecer o suporte necessário!' },
            { h: 'h-[19px]' },
            { h: 'h-[19px]', track: 'tracking-[-0.06px]', parts: <><Emoji name="rocket" /><Emoji name="laptop" />Antes disso, por favor, informe-nos qual serviço você</> },
            { h: 'h-5', track: 'tracking-[-0.1px]', parts: <>deseja. <Emoji name="thinking" /></> },
            { h: 'h-[19px]' },
            { h: 'h-5', track: 'tracking-[0.13px]', parts: <>1 - Aplicativo <Emoji name="phone" /></> },
            { h: 'h-5', track: 'tracking-[0.08px]', parts: <>2 - Website <Emoji name="globe" /></> },
            { h: 'h-5', track: 'tracking-[0.08px]', parts: <>3 - Landing Page <Emoji name="page" /></> },
            { h: 'h-5', track: 'tracking-[-0.04px]', parts: <>4 - Projeto personalizado <Emoji name="target" /></> },
          ]} />
          <svg className="absolute -right-[31px] top-[111px]" width="25" height="25">
            <circle cx="12.500" cy="12.500" r="12.500" fill="#05090c" /><circle cx="12.500" cy="12.500" r="7.500" fill="#868a8d" />
            <circle cx="10" cy="10.800" r="1.200" fill="#05090c" /><circle cx="15" cy="10.800" r="1.200" fill="#05090c" /><path d="M8 13.500h9q-1 4-4.500 4T8 13.500z" fill="#05090c" />
          </svg>
        </Incoming>
        <Outgoing text="3" />
        <Incoming quote="3" className="mt-3 h-[284px] rounded-b-[7.5px] rounded-tr-[7.5px] pt-1">
          <Lines rows={[
            { h: 'h-[19px]', track: 'tracking-[-0.11px]', t: 'Para melhor auxiliá-lo e fornecer o suporte adequado, precisamos' },
            { h: 'h-5', track: 'tracking-[-0.12px]', parts: <>compreender melhor o seu problema. <Emoji name="thinking" /><Emoji name="wrench" /></> },
            { h: 'h-[19px]' },
            { h: 'h-5', track: 'tracking-[-0.12px]', parts: <><Emoji name="smile" /><Emoji name="laptop" />Por favor, explique detalhadamente qual é a questão que</> },
            { h: 'h-[19px]', track: 'tracking-[-0.16px]', t: 'está enfrentando.' },
            { h: 'h-[19px]' },
            { h: 'h-5', track: 'tracking-[-0.14px]', parts: <><Emoji name="smile" /><Emoji name="receiver" />Gostaríamos de informar que um de nossos atendentes</> },
            { h: 'h-[19px]', track: 'tracking-[-0.08px]', t: 'entrará em contato com você o mais breve possível.' },
            { h: 'h-[19px]' },
            { h: 'h-5', track: 'tracking-[-0.16px]', t: 'Estamos ansiosos para entender suas necessidades e oferecer' },
            { h: 'h-[19px]', track: 'tracking-[-0.14px]', parts: <>uma solução personalizada. <Emoji name="laptop" /><Emoji name="wrench" /></> },
          ]} />
        </Incoming>
      </main>

      <div className="absolute left-[323px] top-[66px] flex h-8 w-[62px] items-center justify-center rounded-[7.5px] bg-[#182229] pb-px text-[12px] tracking-[-0.4px] text-[#8696a0]">TODAY</div>
      <div className="absolute left-0 top-[57px] h-[815px] w-[3px] bg-[#0b1218]" />
      <div className="absolute left-0 top-[106px] h-[209px] w-[3px] bg-[#374045]" />
      <div className="absolute left-[3px] top-0 h-[872px] w-px bg-[#28343b]" />
      <div className="absolute right-0 top-[756px] h-[116px] w-1 bg-[#2d363c]" />
    </div>
  )
}
